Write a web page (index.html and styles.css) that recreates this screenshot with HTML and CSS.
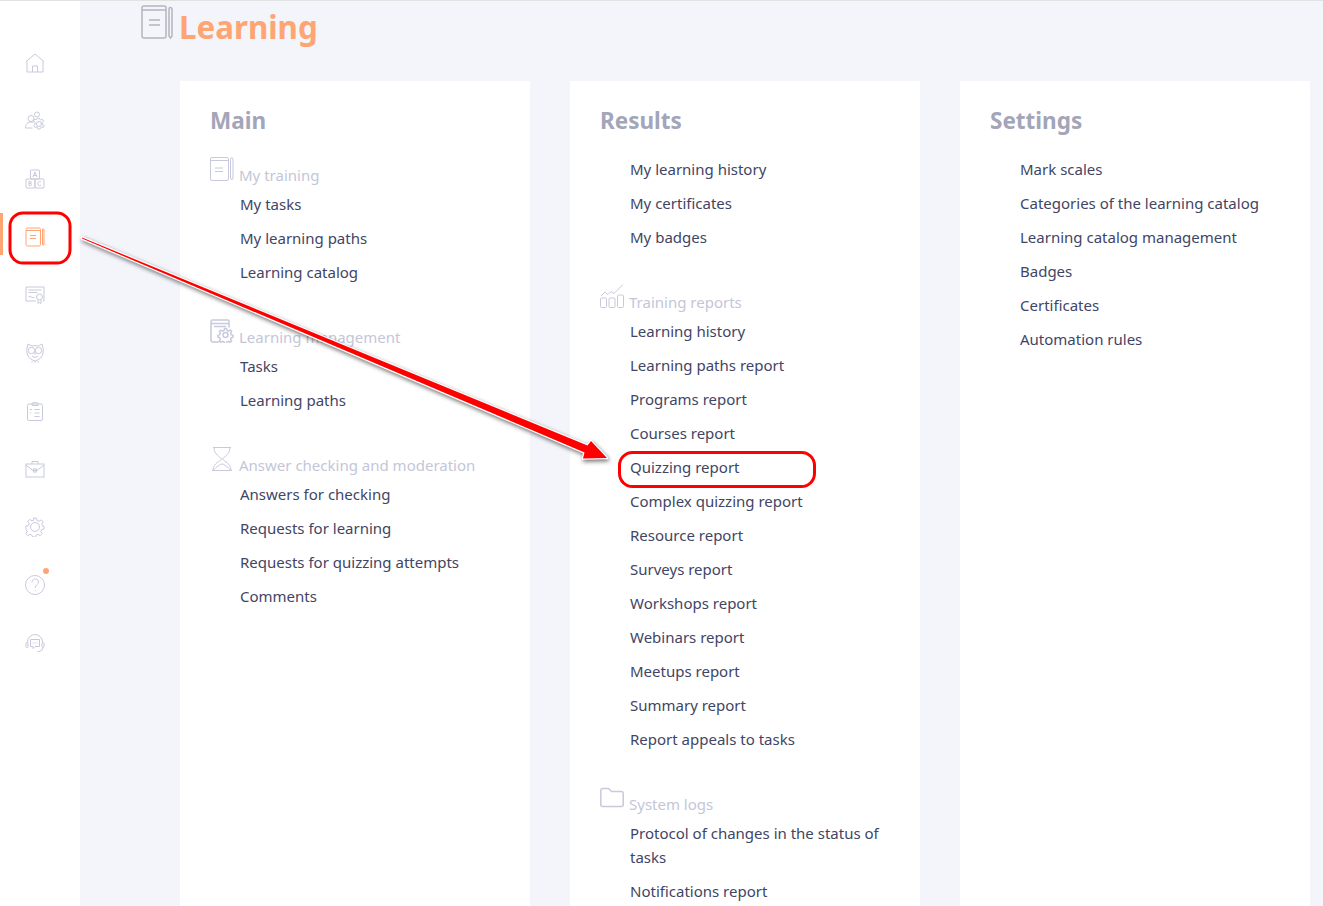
FILE: index.html
```html
<!DOCTYPE html>
<html lang="en">
<head>
<meta charset="utf-8">
<title>Learning</title>
<link rel="stylesheet" href="styles.css">
</head>
<body>
<div class="app">
  <nav class="sidebar">
    <div class="nav-item"><svg class="nav-icon" viewBox="0 0 20 20"><path d="M1 8.500 10 1l9 7.500M2 8v11h16V8M7.500 19v-6h5v6"/></svg></div>
    <div class="nav-item"><svg class="nav-icon" viewBox="0 0 20 20"><circle cx="6" cy="7.500" r="3"/><path d="M.5 17c0-4 2.500-6 5.500-6 1 0 2 .2 2.500.6M7.500 17H.5"/><circle cx="12" cy="3.500" r="2.500"/><circle cx="14" cy="13" r="2.500"/><path d="M14 7l1.300 2 2.200-.6 1 1.800-1.500 1.500.5 1.800 1.800 1-1 1.900-2-.4-1.300 2h-2l-1-2-2.200.2-1-1.800 1.500-1.500-.4-1.800-1.600-1 1-1.900 2.200.5 1-1.700z"/></svg></div>
    <div class="nav-item"><svg class="nav-icon" viewBox="0 0 20 20"><rect x="5.500" y="1" width="9" height="9" rx="1"/><rect x="1" y="10" width="9" height="9" rx="1"/><rect x="10" y="10" width="9" height="9" rx="1"/><path d="M8 8l2-5 2 5M8.800 6.500h2.400M4 12.500v4h1.500a1 1 0 0 0 0-2H4h1.300a1 1 0 0 0 0-2zM16 13a2 2 0 1 0 0 3"/></svg></div>
    <div class="nav-item nav-active"><svg class="nav-icon" viewBox="0 0 20 20"><rect x="1" y="1" width="14.500" height="18" rx="1.500"/><path d="M1 3.500h14.500M5 8.500h6M5 11.500h6M17.500 2v16h1.500V2z"/></svg></div>
    <div class="nav-item"><svg class="nav-icon" viewBox="0 0 20 20"><path d="M11 16H1V2h18v14h-1M3.500 5h13M3.500 7.500h9M3.500 12l2-1 1 1.500h3"/><circle cx="14.500" cy="12" r="3"/><path d="M13 15v3.500l1.500-1 1.500 1V15"/></svg></div>
    <div class="nav-item"><svg class="nav-icon" viewBox="0 0 20 20"><path d="M3 1q3 1.500 4 2 3-.8 6 0 1-.5 4-2 2 5 1 9-1 6-8 8-7-2-8-8-1-4 1-9z"/><circle cx="6.500" cy="7.500" r="3.200"/><circle cx="13.500" cy="7.500" r="3.200"/><path d="M10 9v3M7 18v1.500M10 18v1.500M13 18v1.500M7 13q3 3 6 0"/></svg></div>
    <div class="nav-item"><svg class="nav-icon" viewBox="0 0 20 20"><rect x="2.500" y="3" width="15" height="16.500" rx="1.500"/><path d="M7 3V2h2q1-2 2 0h2v2.500H7zM9.500 8.500h5M9.500 12h5M9.500 15.500h5M5 8.500h2M5 12h1"/></svg></div>
    <div class="nav-item"><svg class="nav-icon" viewBox="0 0 20 20"><rect x="1" y="5" width="18" height="13"/><path d="M7 5V2.500h6V5M1 6l7 5.500h4L19 6"/><rect x="8.500" y="10" width="3" height="3"/></svg></div>
    <div class="nav-item"><svg class="nav-icon" viewBox="0 0 20 20"><circle cx="10" cy="10" r="4.500"/><path d="M8.500 1h3l.5 2.500 2 .8 2.200-1.400 2 2-1.400 2.200.8 2L19 9v3l-2.400.6-.8 1.900 1.400 2.200-2 2-2.200-1.400-1.900.8-.6 2h-3l-.6-2-1.900-.8-2.200 1.400-2-2 1.400-2.200-.8-1.900L1 12V9l2.400-.4.8-2-1.400-2.200 2-2 2.200 1.400 2-.8z"/></svg></div>
    <div class="nav-item nav-help"><svg class="nav-icon" viewBox="0 0 20 20"><circle cx="10" cy="10" r="9.500"/><path d="M7 7.500C7 5 9 4 10.300 4 12.500 4 13.500 5.500 13.500 7c0 2.500-3.300 3-3.300 6M10.200 15.200v1"/></svg><span class="nav-dot"></span></div>
    <div class="nav-item"><svg class="nav-icon" viewBox="0 0 20 20"><path d="M2.500 10V9a7.500 7.500 0 0 1 15 0v1"/><rect x="1" y="9.500" width="2" height="5" rx="1"/><rect x="17" y="9.500" width="2" height="5" rx="1"/><path d="M5.500 6.500h9v7H10l-2 2v-2H5.500zM7.500 10h1M9.500 10h1M11.500 10h1M18 14.500q0 3.500-4 4h-1.500"/></svg></div>
  </nav>

  <main class="content">
    <header class="page-head">
      <svg class="page-icon" viewBox="0 0 32 34"><rect x="1" y="1" width="24" height="32" rx="2"/><path d="M1 5h24M8 15h11M8 20h11M28 4a1.500 1.500 0 0 1 3 0v27l-1.500 2-1.500-2z"/></svg>
      <h1 class="page-title">Learning</h1>
    </header>

    <div class="columns">
      <section class="card">
        <h2 class="card-title">Main</h2>
        <div class="group group-first">
          <h3 class="group-head">
            <svg class="group-icon" viewBox="0 0 24 24"><rect x=".5" y=".5" width="18" height="23" rx="1.500"/><path d="M.5 3.500h18M5 11h8M5 14.500h8M20.500 2a1 1 0 0 1 2.500 0v19l-1.200 2-1.300-2z"/></svg>
            My training
          </h3>
          <a class="link">My tasks</a>
          <a class="link">My learning paths</a>
          <a class="link">Learning catalog</a>
        </div>
        <div class="group">
          <h3 class="group-head">
            <svg class="group-icon group-icon-bold" viewBox="0 0 24 24"><path d="M9 23H3a2 2 0 0 1-2-2V2.500a1.500 1.500 0 0 1 1.500-1.500H17A1.500 1.500 0 0 1 19 2.500v6M1 4.500h18M4 7.500h12"/><circle cx="15.500" cy="16" r="2.500"/><path d="M14.500 9.500h2l.5 2 1.500.6 1.700-1 1.400 1.400-1 1.800.6 1.400 1.800.5v2l-1.800.5-.6 1.400 1 1.800-1.400 1.400-1.700-1-1.500.6-.5 1.600h-2l-.5-1.600-1.500-.6-1.700 1-1.400-1.400 1-1.800-.6-1.400-1.800-.5v-2l1.800-.5.6-1.400-1-1.800 1.400-1.400 1.700 1 1.500-.6z"/></svg>
            Learning management
          </h3>
          <a class="link">Tasks</a>
          <a class="link">Learning paths</a>
        </div>
        <div class="group">
          <h3 class="group-head">
            <svg class="group-icon" viewBox="0 0 24 24"><path d="M3 .5h18M4 1c.5 7 6 8.500 7.500 11-1.500 2.500-8 4-8.500 11M20 1c-.5 7-6 8.500-7.500 11 1.500 2.500 8 4 8.500 11M2 23.500h20M6 20.500c3-2 4-3.500 6-3.500s3 1.500 6 3.500l3 3H3z"/></svg>
            Answer checking and moderation
          </h3>
          <a class="link">Answers for checking</a>
          <a class="link">Requests for learning</a>
          <a class="link">Requests for quizzing attempts</a>
          <a class="link">Comments</a>
        </div>
      </section>

      <section class="card">
        <h2 class="card-title">Results</h2>
        <div class="group">
          <a class="link">My learning history</a>
          <a class="link">My certificates</a>
          <a class="link">My badges</a>
        </div>
        <div class="group">
          <h3 class="group-head">
            <svg class="group-icon" viewBox="0 0 24 24"><path d="M1 12l4-4 3 2.500 3-3 3 2 9-9"/><rect x=".5" y="14" width="6" height="9.500" rx="1"/><rect x="9" y="14" width="6" height="9.500" rx="1"/><rect x="17.500" y="11" width="6" height="12.500" rx="1"/></svg>
            Training reports
          </h3>
          <a class="link">Learning history</a>
          <a class="link">Learning paths report</a>
          <a class="link">Programs report</a>
          <a class="link">Courses report</a>
          <a class="link">Quizzing report</a>
          <a class="link">Complex quizzing report</a>
          <a class="link">Resource report</a>
          <a class="link">Surveys report</a>
          <a class="link">Workshops report</a>
          <a class="link">Webinars report</a>
          <a class="link">Meetups report</a>
          <a class="link">Summary report</a>
          <a class="link">Report appeals to tasks</a>
        </div>
        <div class="group">
          <h3 class="group-head">
            <svg class="group-icon group-icon-bold" viewBox="0 0 24 24"><path d="M.8 4.500A2 2 0 0 1 2.800 2.500h5.700l3 3h9.700a2 2 0 0 1 2 2v11a2 2 0 0 1-2 2H2.800a2 2 0 0 1-2-2z"/></svg>
            System logs
          </h3>
          <a class="link">Protocol of changes in the status of tasks</a>
          <a class="link">Notifications report</a>
        </div>
      </section>

      <section class="card">
        <h2 class="card-title">Settings</h2>
        <div class="group">
          <a class="link">Mark scales</a>
          <a class="link">Categories of the learning catalog</a>
          <a class="link">Learning catalog management</a>
          <a class="link">Badges</a>
          <a class="link">Certificates</a>
          <a class="link">Automation rules</a>
        </div>
      </section>
    </div>
  </main>
</div>

<svg class="annotations" viewBox="0 0 1323 906">
  <rect class="mark" x="10" y="213" width="60" height="50" rx="13"/>
  <rect class="mark" x="619.500" y="452.500" width="195" height="34" rx="13"/>
  <polygon class="arrow" points="82,237.500 82,238.500 584.500,452.500 583,458.500 607,458 591,441 587.500,445.500"/>
</svg>
</body>
</html>
```

FILE: styles.css
```css
* { box-sizing: border-box; }

html, body {
  margin: 0;
  height: 906px;
  overflow: hidden;
}

body {
  font-family: "Noto Sans", "Open Sans", sans-serif;
  background: #f4f5fa;
  color: #3f4565;
}

.app {
  display: flex;
  height: 906px;
  border-top: 1px solid #e2e2e2;
  overflow: hidden;
}

.sidebar {
  flex: 0 0 80px;
  background: #fff;
  padding: 33px 10px 0 0;
}

.nav-item {
  position: relative;
  height: 58px;
  padding-left: 15px;
  display: flex;
  align-items: center;
}

.nav-icon {
  width: 20px;
  height: 20px;
  margin-left: 10px;
  fill: none;
  stroke: #c8c9dc;
  stroke-width: 1;
}

.nav-active .nav-icon { stroke: #ffa574; }

.nav-active::before {
  content: "";
  position: absolute;
  left: 0;
  top: 5px;
  width: 3px;
  height: 42px;
  background: #ffa574;
}

.nav-dot {
  position: absolute;
  left: 43px;
  top: 12px;
  width: 6px;
  height: 6px;
  border-radius: 50%;
  background: #ffa574;
}

.content {
  flex: 1;
  min-width: 0;
}

.page-head {
  display: flex;
  align-items: flex-start;
  gap: 6px;
  height: 80px;
  padding: 4px 0 0 61px;
}

.page-icon {
  width: 32px;
  height: 34px;
  fill: none;
  stroke: #b4b4bd;
  stroke-width: 1.500;
}

.page-title {
  margin: 0;
  font-size: 31.300px;
  line-height: 44px;
  font-weight: 700;
  color: #ffa574;
}

.columns {
  display: grid;
  grid-template-columns: repeat(3, 350px);
  gap: 40px;
  padding-left: 100px;
  align-items: stretch;
}

.card {
  background: #fff;
  padding: 24px 30px 40px 30px;
  min-height: 900px;
}

.card-title {
  margin: 0 0 16px;
  font-size: 22.500px;
  line-height: 31px;
  font-weight: 700;
  color: #a3a5b8;
}

.group + .group { margin-top: 30px; }
.group-first { padding-top: 5px; }

.group-head {
  display: flex;
  align-items: flex-end;
  height: 30px;
  margin: 0;
  font-size: 15px;
  line-height: 24px;
  font-weight: 400;
  color: #c4c6d8;
  white-space: nowrap;
}

.group-icon {
  flex: none;
  width: 24px;
  height: 24px;
  margin: 0 5px 6px 0;
  fill: none;
  stroke: #c8c9dc;
  stroke-width: 1;
}

.group-icon-bold { stroke-width: 1.500; }

.link {
  display: block;
  padding: 5px 0 5px 30px;
  font-size: 15px;
  line-height: 24px;
}

.annotations {
  position: absolute;
  left: 0;
  top: 0;
  width: 1323px;
  height: 906px;
  pointer-events: none;
}

.mark {
  fill: none;
  stroke: #f00;
  stroke-width: 3;
}

.arrow {
  fill: #f00;
  stroke: #fff;
  stroke-width: 2.500;
  stroke-linejoin: round;
  paint-order: stroke;
  filter: drop-shadow(1px 2px 2px rgba(0, 0, 0, .55));
}
```
